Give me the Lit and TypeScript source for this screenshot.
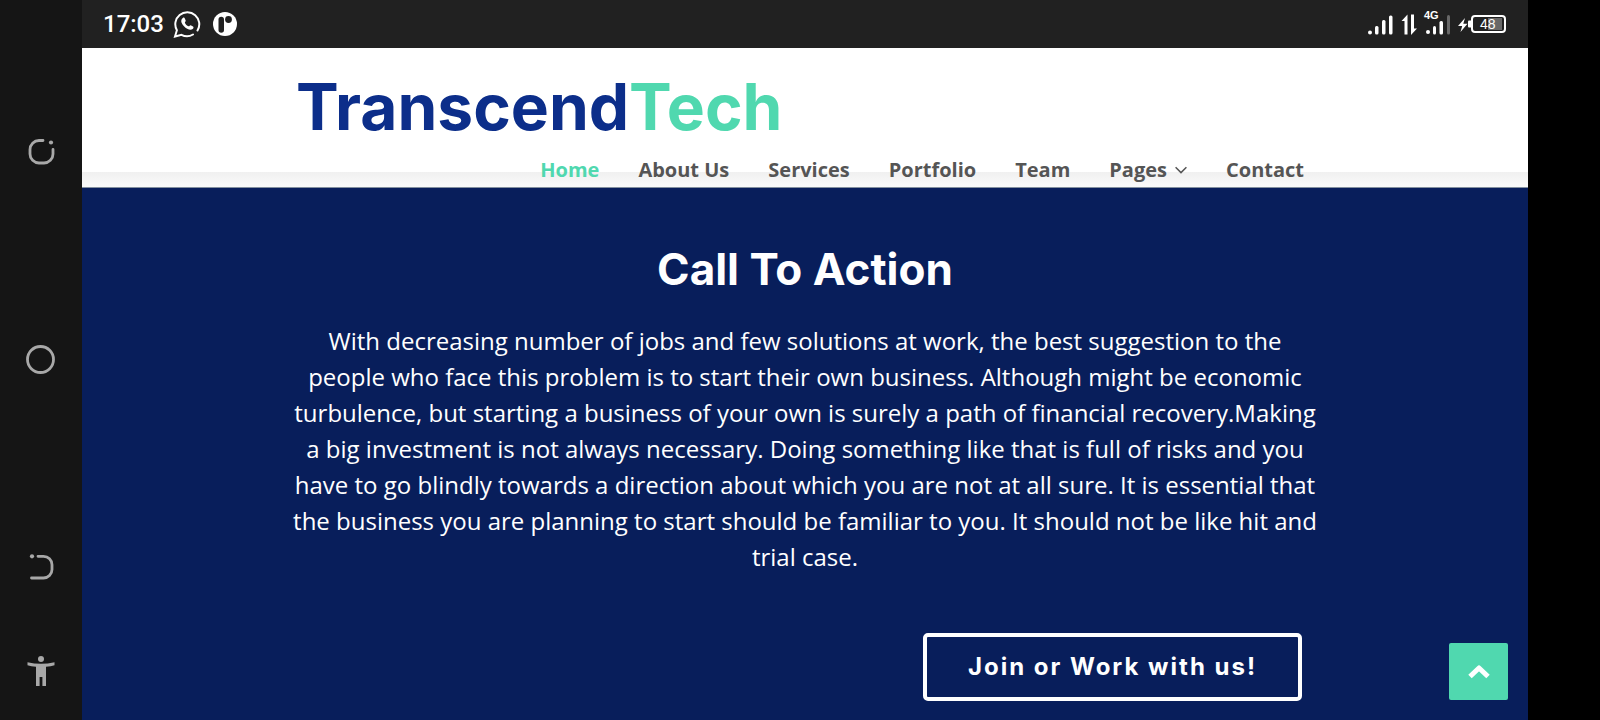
import { LitElement, html, css } from "lit";
import { customElement } from "lit/decorators.js";

@customElement("device-rail")
class DeviceRail extends LitElement {
  static styles = css`
    :host { display: block; background: #151515; }
    .rail { height: 100%; box-sizing: border-box; display: flex; flex-direction: column; align-items: center; padding: 136px 0 35px; }
    .key { border: 0; padding: 0; background: none; color: #a8a8a8; width: 30px; height: 30px; display: block; }
    .home { margin-top: 178px; }
    .back { margin-top: 178px; }
    .access { margin-top: auto; }
    svg { display: block; }
  `;
  render() {
    return html`<nav class="rail" aria-label="System navigation">
      <button class="key" aria-label="Recent apps">
        <svg width="30" height="30" viewBox="0 0 30 30" fill="none" stroke="currentColor" stroke-width="2.8" stroke-linecap="round"><path d="M17 4.500h-4a9 9 0 0 0-9 9v4.500a9 9 0 0 0 9 9h5a9 9 0 0 0 9-9v-4.500" /><circle cx="25" cy="6.500" r="2.100" fill="currentColor" stroke="none" /></svg>
      </button>
      <button class="key home" aria-label="Home">
        <svg width="30" height="30" viewBox="0 0 30 30" fill="none" stroke="currentColor" stroke-width="2.800"><circle cx="14.500" cy="15.500" r="13" /></svg>
      </button>
      <button class="key back" aria-label="Back">
        <svg width="30" height="30" viewBox="0 0 30 30" fill="none" stroke="currentColor" stroke-width="2.800" stroke-linecap="round"><path d="M12 4.300h5.500a8.500 8.500 0 0 1 8.500 8.500v4.700a8.500 8.500 0 0 1-8.500 8.500H5.500" /><circle cx="6" cy="4.300" r="2.100" fill="currentColor" stroke="none" /></svg>
      </button>
      <button class="key access" aria-label="Accessibility">
        <svg width="30" height="32" viewBox="0 0 30 32" fill="currentColor"><circle cx="15" cy="4" r="3" /><path d="M1.500 7.200Q15 10.500 28.500 7.200v3Q25 11.300 20 11.800V31h-3.600v-9h-2.800v9H10V11.800Q5 11.300 1.500 10.200z" /></svg>
      </button>
    </nav>`;
  }
}

@customElement("status-bar")
class StatusBar extends LitElement {
  static styles = css`
    :host { display: block; background: #212121; color: #fff; font-family: Roboto, sans-serif; }
    .bar { height: 48px; box-sizing: border-box; padding: 0 22px 0 21px; display: flex; align-items: center; justify-content: space-between; }
    .group { display: flex; align-items: center; }
    .time { font-size: 24px; font-weight: 500; line-height: 28px; margin-right: 9px; }
    .app { margin-left: 12px; }
    svg { display: block; }
    .tag { font: 700 11px "Liberation Sans", sans-serif; fill: #fff; }
    .level { font: 400 14px "Liberation Sans", sans-serif; fill: #fff; }
  `;
  render() {
    return html`<div class="bar">
      <div class="group">
        <time class="time">17:03</time>
        <svg width="28" height="28" viewBox="0 0 28 28" fill="none" stroke="#fff" stroke-width="2" stroke-linecap="round"><path d="M20 24.500a12 12 0 0 1-11.500.3L2 26.500l1.900-6.300A12 12 0 1 1 24.500 20.500" /><path fill="#fff" stroke="none" d="M9.800 8c.9-.7 1.700-.4 2 .4l.9 2.200c.3.900-1 1.500-.8 2.100.7 1.600 2 2.900 3.700 3.600.7.300 1.300-1.200 2.100-1l2.300 1.100c.9.500.5 1.900-.3 2.600-1.500 1.300-3.400.9-5.500-.2-2.300-1.200-4.400-3.300-5.500-5.700-.8-1.800-.5-3.900 1.100-5.100z" /></svg>
        <svg class="app" width="24" height="24" viewBox="0 0 24 24"><circle cx="12" cy="12" r="12" fill="#fff" /><path d="M5.500 7.500a2.700 2.700 0 0 1 5.500 0v10.500a2.700 2.700 0 0 1-5.500 0z" fill="#212121" /><circle cx="15.500" cy="7.500" r="3.400" fill="#212121" /></svg>
      </div>
      <svg width="138" height="36" viewBox="0 0 138 36" role="img" aria-label="Signal, 4G data, battery 48">
        <g fill="#fff">
          <circle cx="2" cy="26.500" r="2" /><rect x="7" y="20" width="3.500" height="8.500" rx="1.500" /><rect x="14" y="14" width="3.500" height="14.500" rx="1.500" /><rect x="21" y="9.500" width="3.500" height="19" rx="1.500" />
          <path d="M39.500 8.500V28.500h-3V15H33.500zM43 8.500h3V22.500h3L43 29z" />
          <circle cx="60" cy="26" r="2" /><rect x="65" y="20" width="3" height="8.500" rx="1.500" /><rect x="71.500" y="15" width="3.500" height="13.500" rx="1.500" />
          <path d="M97 12l-7 8h4.200L92.500 26l7-8.200h-4.200z" /><path d="M103 14.500v7h-2a1 1 0 0 1-1-1v-5a1 1 0 0 1 1-1z" />
        </g>
        <rect x="79" y="9" width="3" height="19.500" rx="1.500" fill="#686868" />
        <text class="tag" x="56" y="13">4G</text>
        <rect x="104" y="10" width="33" height="16" rx="3" fill="none" stroke="#fff" stroke-width="2" /><rect x="120" y="12" width="14" height="12" fill="#686868" />
        <text class="level" x="112" y="23">48</text>
      </svg>
    </div>`;
  }
}

@customElement("site-header")
class SiteHeader extends LitElement {
  static styles = css`
    :host { display: block; background: linear-gradient(to top, #fafafa, #f0f0f0 15px, #fff 15px); border-bottom: 1px solid #83909f; }
    .inner { max-width: 1034px; box-sizing: border-box; margin: 0 auto; padding: 23px 8px 5px; }
    .logo { display: block; width: max-content; font: 700 64px/72px Inter, sans-serif; color: #0c2e8a; text-decoration: none; }
    .accent { color: #50d8af; }
    .menu { list-style: none; margin: 15px 10px 0 0; padding: 0; display: flex; justify-content: flex-end; gap: 39px; font: 700 20px/24px "Open Sans", sans-serif; }
    .link { color: #555; text-decoration: none; display: flex; align-items: center; gap: 8px; }
    .active { color: #50d8af; }
  `;
  render() {
    const items = ["Home", "About Us", "Services", "Portfolio", "Team", "Pages", "Contact"];
    return html`<header class="inner">
      <a class="logo" href="#home">Transcend<span class="accent">Tech</span></a>
      <nav aria-label="Main"><ul class="menu">
        ${items.map((t, i) => html`<li><a class="link ${i === 0 ? "active" : ""}" href="#${t}">${t}${t === "Pages"
          ? html`<svg width="12" height="8" viewBox="0 0 12 8" fill="none" stroke="currentColor" stroke-width="1.500"><path d="M.6 1.200 6 6.600l5.400-5.400" /></svg>` : ""}</a></li>`)}
      </ul></nav>
    </header>`;
  }
}

@customElement("call-to-action")
class CallToAction extends LitElement {
  static styles = css`
    :host { display: block; background: #081e5b; color: #fff; }
    .inner { max-width: 1034px; margin: 0 auto; padding: 55px 0 18px; display: flex; flex-direction: column; }
    .title { margin: 0; text-align: center; font: 700 44px/52px Inter, sans-serif; }
    .text { margin: 28px 0 0; text-align: center; font: 400 24px/36px "Open Sans", sans-serif; }
    .join { align-self: flex-end; margin: 58px 20px 0 0; box-sizing: border-box; height: 68px; padding: 0 41px; border: 4px solid #fff; border-radius: 5px; color: #fff; text-decoration: none; font: 700 24px/60px Inter, sans-serif; letter-spacing: 2px; }
    .top { position: absolute; right: 20px; bottom: 20px; width: 59px; height: 57px; padding: 0; border: 0; border-radius: 2px; background: #50d8af; display: grid; place-items: center; }
  `;
  render() {
    return html`<section class="inner">
      <h2 class="title">Call To Action</h2>
      <p class="text">With decreasing number of jobs and few solutions at work, the best suggestion to the people who face this problem is to start their own business. Although might be economic turbulence, but starting a business of your own is surely a path of financial recovery.Making a big investment is not always necessary. Doing something like that is full of risks and you have to go blindly towards a direction about which you are not at all sure. It is essential that the business you are planning to start should be familiar to you. It should not be like hit and trial case.</p>
      <a class="join" href="#contact">Join or Work with us!</a>
    </section>
    <button class="top" aria-label="Back to top"><svg width="22" height="16" viewBox="0 0 22 16" fill="none" stroke="#fff" stroke-width="5" stroke-linejoin="round"><path d="M2 12.500l9-8.500 9 8.500" /></svg></button>`;
  }
}

@customElement("app-root")
class AppRoot extends LitElement {
  static styles = css`
    :host { display: block; background: #000; }
    .screen { min-height: 100vh; display: grid; grid-template-columns: 82px minmax(0, 1fr) 72px; }
    .page { position: relative; display: flex; flex-direction: column; }
    .fill { flex: 1; }
  `;
  render() {
    return html`<div class="screen">
      <device-rail></device-rail>
      <main class="page">
        <status-bar></status-bar>
        <site-header></site-header>
        <call-to-action class="fill"></call-to-action>
      </main>
    </div>`;
  }
}
